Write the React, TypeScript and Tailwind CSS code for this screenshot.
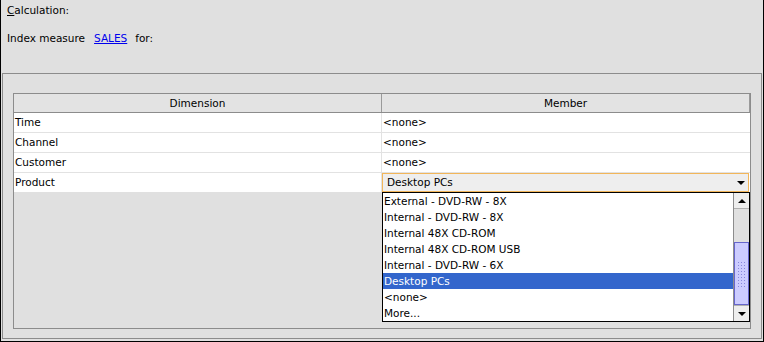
import React from "react";

const rows = [
  { dim: "Time", member: "<none>" },
  { dim: "Channel", member: "<none>" },
  { dim: "Customer", member: "<none>" },
];

const options = [
  "External - DVD-RW - 8X",
  "Internal - DVD-RW - 8X",
  "Internal 48X CD-ROM",
  "Internal 48X CD-ROM USB",
  "Internal - DVD-RW - 6X",
  "Desktop PCs",
  "<none>",
  "More...",
];

function TriangleDown({ className = "" }: { className?: string }) {
  return (
    <svg width="8" height="4" viewBox="0 0 8 4" className={className}>
      <path d="M0 0H8L4 4Z" fill="#000" />
    </svg>
  );
}

function TriangleUp({ className = "" }: { className?: string }) {
  return (
    <svg width="8" height="4" viewBox="0 0 8 4" className={className}>
      <path d="M0 4H8L4 0Z" fill="#000" />
    </svg>
  );
}

export default function App() {
  return (
    <div className="w-[764px] h-[342px] bg-[#e0e0e0] border-l border-r border-b border-black flex flex-col font-['DejaVu_Sans',sans-serif] text-[10.5px] leading-[13px] text-black overflow-hidden">
      {/* Top labels */}
      <div className="pl-[6px] pt-[4px]">
        <div>
          <span className="underline">C</span>alculation:
        </div>
        <div className="mt-[15px] flex items-center">
          <span>Index measure</span>
          <span className="ml-[9px] text-[#0000ee] underline">SALES</span>
          <span className="ml-[8px]">for:</span>
        </div>
      </div>

      {/* Panel */}
      <div className="mt-[28px] mx-[1px] mb-[2px] flex-1 border border-[#8c8c8c] pt-[19px] px-[10px] pb-[9px] flex flex-col">
        <div className="relative flex-1 border border-[#8c8c8c] bg-[#e0e0e0]">
          {/* Header */}
          <div className="flex h-[19px] border-b border-[#8c8c8c] bg-[#e3e3e3]">
            <div className="w-[368px] border-r border-[#9a9a9a] flex items-center justify-center">
              Dimension
            </div>
            <div className="w-[368px] border-r border-[#9a9a9a] flex items-center justify-center">
              Member
            </div>
          </div>

          {/* Rows */}
          {rows.map((r) => (
            <div key={r.dim} className="flex h-[20px] bg-white border-b border-[#e2e2e2]">
              <div className="w-[368px] border-r border-[#e2e2e2] pl-[1px] flex items-center">{r.dim}</div>
              <div className="w-[368px] pl-[1px] flex items-center">{r.member}</div>
            </div>
          ))}

          <div className="flex h-[19px] bg-white">
            <div className="w-[368px] border-r border-[#e2e2e2] pl-[1px] flex items-center">Product</div>
            <div className="w-[367px] border border-[#f2b65a] bg-[#eeeeee] pl-[4px] pr-[3px] flex items-center justify-between">
              <span>Desktop PCs</span>
              <TriangleDown />
            </div>
          </div>

          {/* Popup list */}
          <div className="absolute left-[368px] top-[98px] w-[368px] h-[130px] border border-black bg-white flex">
            <div className="flex-1 flex flex-col">
              {options.map((o) => (
                <div
                  key={o}
                  className={`h-[16px] pl-[1px] flex items-center ${
                    o === "Desktop PCs" ? "bg-[#3366cc] text-white" : ""
                  }`}
                >
                  {o}
                </div>
              ))}
            </div>
            <div className="w-[16px] flex flex-col bg-[#e0e0e0] border-l border-[#8c8c8c]">
              <div className="h-[16px] bg-[#eeeeee] border-b border-[#b0b0b0] flex items-center justify-center">
                <TriangleUp />
              </div>
              <div className="h-[33px]" />
              <div className="flex-1 bg-[#ccccff] border border-[#6666cc] flex items-center justify-center">
                <div className="w-[10px] h-[26px] bg-[radial-gradient(circle,#8888dd_0.8px,transparent_1px)] bg-[length:3px_3px]" />
              </div>
              <div className="h-[16px] bg-[#eeeeee] border-t border-[#b0b0b0] flex items-center justify-center">
                <TriangleDown />
              </div>
            </div>
          </div>
        </div>
      </div>
    </div>
  );
}
